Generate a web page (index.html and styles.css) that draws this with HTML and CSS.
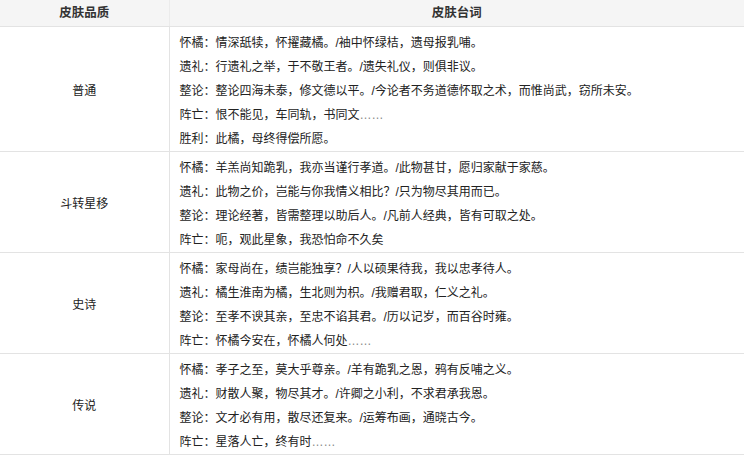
FILE: index.html
```html
<!DOCTYPE html>
<html lang="zh-CN">
<head>
<meta charset="utf-8">
<title>皮肤台词</title>
<link rel="stylesheet" href="styles.css">
</head>
<body>
<table class="skin-table">
  <colgroup>
    <col class="col-quality">
    <col class="col-lines">
  </colgroup>
  <thead>
    <tr>
      <th class="head-cell">皮肤品质</th>
      <th class="head-cell head-lines">皮肤台词</th>
    </tr>
  </thead>
  <tbody>
    <tr>
      <td class="quality">普通</td>
      <td class="lines">
        <div class="line">怀橘：情深舐犊，怀擢藏橘。/袖中怀绿桔，遗母报乳哺。</div>
        <div class="line">遗礼：行遗礼之举，于不敬王者。/遗失礼仪，则俱非议。</div>
        <div class="line">整论：整论四海未泰，修文德以平。/今论者不务道德怀取之术，而惟尚武，窃所未安。</div>
        <div class="line">阵亡：恨不能见，车同轨，书同文<span class="dots">……</span></div>
        <div class="line">胜利：此橘，母终得偿所愿。</div>
      </td>
    </tr>
    <tr>
      <td class="quality">斗转星移</td>
      <td class="lines">
        <div class="line">怀橘：羊羔尚知跪乳，我亦当谨行孝道。/此物甚甘，愿归家献于家慈。</div>
        <div class="line">遗礼：此物之价，岂能与你我情义相比？/只为物尽其用而已。</div>
        <div class="line">整论：理论经著，皆需整理以助后人。/凡前人经典，皆有可取之处。</div>
        <div class="line">阵亡：呃，观此星象，我恐怕命不久矣</div>
      </td>
    </tr>
    <tr>
      <td class="quality">史诗</td>
      <td class="lines">
        <div class="line">怀橘：家母尚在，绩岂能独享？/人以硕果待我，我以忠孝待人。</div>
        <div class="line">遗礼：橘生淮南为橘，生北则为枳。/我赠君取，仁义之礼。</div>
        <div class="line">整论：至孝不谀其亲，至忠不谄其君。/历以记岁，而百谷时雍。</div>
        <div class="line">阵亡：怀橘今安在，怀橘人何处<span class="dots">……</span></div>
      </td>
    </tr>
    <tr>
      <td class="quality">传说</td>
      <td class="lines">
        <div class="line">怀橘：孝子之至，莫大乎尊亲。/羊有跪乳之恩，鸦有反哺之义。</div>
        <div class="line">遗礼：财散人聚，物尽其才。/许卿之小利，不求君承我恩。</div>
        <div class="line">整论：文才必有用，散尽还复来。/运筹布画，通晓古今。</div>
        <div class="line">阵亡：星落人亡，终有时<span class="dots">……</span></div>
      </td>
    </tr>
  </tbody>
</table>
</body>
</html>
```
FILE: styles.css
```css
html, body {
  margin: 0;
  padding: 0;
  background: #ffffff;
}

body {
  font-family: "Liberation Sans", "Noto Sans CJK SC", sans-serif;
  font-size: 12px;
  color: #222222;
}

.skin-table {
  width: 744px;
  table-layout: fixed;
  border-collapse: collapse;
  border-spacing: 0;
}

.col-quality {
  width: 169px;
}

.col-lines {
  width: 575px;
}

.head-cell {
  height: 26px;
  padding: 0;
  line-height: 26px;
  font-size: 12.5px;
  font-weight: bold;
  color: #333333;
  background: #f5f5f5;
  text-align: center;
  border-bottom: 1px solid #e3e3e3;
}

.head-lines {
  border-left: 1px solid #ebebeb;
}

.quality {
  padding: 0;
  text-align: center;
  vertical-align: middle;
  border-bottom: 1px solid #e3e3e3;
}

.lines {
  padding: 4px 10px 0;
  vertical-align: top;
  border-left: 1px solid #e3e3e3;
  border-bottom: 1px solid #e3e3e3;
}

.line {
  line-height: 24px;
  white-space: nowrap;
}

.dots {
  color: #888888;
}
```
